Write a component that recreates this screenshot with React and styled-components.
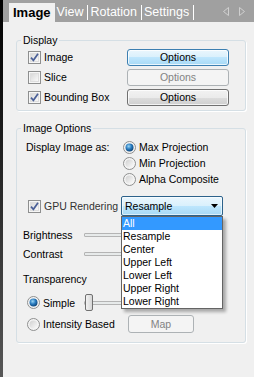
import React from 'react';
import styled, { createGlobalStyle, css } from 'styled-components';

const GlobalStyle = createGlobalStyle`
  html, body {
    margin: 0;
    padding: 0;
  }

  body {
    width: 254px;
    height: 377px;
    overflow: hidden;
    background: #f0f0f0;
    font-family: 'Liberation Sans', Arial, sans-serif;
    font-size: 10.5px;
    color: #000;
  }
`;

const Window = styled.div`
  display: flex;
  width: 254px;
  height: 377px;
`;

const Edge = styled.div`
  width: 3px;
  flex-shrink: 0;
  background: linear-gradient(#000 0%, #1c1c1c 35%, #575757 100%);
`;

const Main = styled.div`
  flex: 1;
  display: flex;
  flex-direction: column;
  background: #f0f0f0;
`;

const TabBar = styled.div`
  display: flex;
  align-items: flex-end;
  height: 22px;
  padding-left: 6px;
  background: #a0a0a0;
`;

const Tab = styled.div`
  white-space: nowrap;
  ${({ $active }) => $active
    ? css`
      height: 19px;
      line-height: 20px;
      padding: 0 4px;
      background: #f0f0f0;
      font-size: 13px;
      font-weight: bold;
      color: #000;
    `
    : css`
      height: 15px;
      line-height: 15px;
      margin-bottom: 2px;
      padding: 0 4px 0 2px;
      border-right: 1px solid #fff;
      font-size: 12.5px;
      color: #fff;
    `}
`;

const Scroller = styled.div`
  display: flex;
  align-items: center;
  gap: 10px;
  height: 22px;
  margin-left: auto;
  padding-right: 9px;
`;

const GroupBox = styled.fieldset`
  margin: ${({ $top }) => $top}px 8px 0 13px;
  padding: 0 0 ${({ $bottom }) => $bottom}px 6px;
  min-width: 0;
  border: 1px solid #d5dfe5;
  border-radius: 3px;
  box-shadow: 1px 1px 0 #fff;
`;

const Legend = styled.legend`
  margin-left: -2px;
  padding: 0 2px;
  line-height: 14px;
`;

const OptionsGrid = styled.div`
  display: grid;
  grid-template-columns: 99px 102px;
  grid-auto-rows: 20px;
  align-items: center;
  padding-left: 5px;
`;

const Check = styled.label`
  display: flex;
  align-items: center;
  gap: 3px;
  white-space: nowrap;
  color: ${({ $faded }) => ($faded ? '#333' : '#000')};
`;

const Button = styled.button`
  width: ${({ $w }) => $w}px;
  height: ${({ $h }) => $h}px;
  padding: 0;
  font: inherit;
  color: #000;
  border: 1px solid #707070;
  border-radius: 3px;
  background: linear-gradient(#f2f2f2 0%, #ebebeb 50%, #dddddd 50%, #cfcfcf 100%);
  box-shadow: inset 0 0 0 1px rgba(255, 255, 255, 0.75);

  ${({ $variant }) => $variant === 'hot' && css`
    border-color: #3c7fb1;
    background: linear-gradient(#eaf6fd 0%, #d9f0fc 50%, #bee6fd 50%, #a7d9f5 100%);
  `}

  ${({ $variant }) => $variant === 'disabled' && css`
    color: #838383;
    border-color: #adb2b5;
    background: #f4f4f4;
    box-shadow: none;
  `}
`;

const ModeGrid = styled.div`
  display: grid;
  grid-template-columns: 97px auto;
  grid-auto-rows: 16px;
  align-items: center;
  margin-top: 4px;
  padding-left: 3px;
`;

const Radio = styled.label`
  display: flex;
  align-items: center;
  gap: 3px;
  white-space: nowrap;
`;

const GpuRow = styled.div`
  display: grid;
  grid-template-columns: 93px 102px;
  align-items: center;
  height: 20px;
  margin-top: 9px;
  padding-left: 5px;
`;

const Combo = styled.div`
  position: relative;
  display: flex;
  align-items: center;
  justify-content: space-between;
  box-sizing: border-box;
  height: 20px;
  padding: 0 4px 0 3px;
  border: 1px solid #2c628b;
  border-radius: 2px;
  background: linear-gradient(#eaf6fd 0%, #d9f0fc 50%, #bee6fd 50%, #a7d9f5 100%);
  box-shadow: inset 0 0 0 1px rgba(255, 255, 255, 0.6);
`;

const List = styled.ul`
  position: absolute;
  top: 19px;
  left: -1px;
  z-index: 2;
  box-sizing: border-box;
  width: 102px;
  margin: 0;
  padding: 0;
  list-style: none;
  background: #fff;
  border: 1px solid #646464;
  box-shadow: 3px 3px 3px rgba(0, 0, 0, 0.3);
`;

const Item = styled.li`
  height: 13px;
  line-height: 13px;
  padding-left: 1px;
  white-space: nowrap;
  color: ${({ $selected }) => ($selected ? '#fff' : '#000')};
  background: ${({ $selected }) => ($selected ? '#3399ff' : 'transparent')};
`;

const SliderRow = styled.div`
  display: grid;
  grid-template-columns: ${({ $label }) => $label}px 1fr;
  align-items: center;
  height: 19px;
  margin-top: ${({ $top }) => $top || 0}px;
  padding-left: ${({ $indent }) => $indent || 0}px;
`;

const Track = styled.div`
  position: relative;
  width: 136px;
  height: 2px;
  border: 1px solid #b4b4b4;
  border-radius: 1px;
  background: #e7eaea;
`;

const Thumb = styled.div`
  position: absolute;
  left: 0;
  top: -8px;
  width: 6px;
  height: 15px;
  border: 1px solid #707070;
  border-radius: 2px;
  background: linear-gradient(90deg, #f2f2f2, #d6d6d6);
`;

const SectionLabel = styled.div`
  height: 14px;
  line-height: 14px;
  margin-top: 9px;
`;

const MapRow = styled.div`
  display: grid;
  grid-template-columns: 101px 66px;
  align-items: center;
  height: 18px;
  margin-top: 3px;
  padding-left: 4px;
`;

function CheckIcon({ checked }) {
  return (
    <svg width="13" height="13" viewBox="0 0 13 13">
      <defs>
        <linearGradient id="cb-in" x1="0" y1="0" x2="1" y2="1">
          <stop offset="0" stopColor="#d7d7d7" />
          <stop offset="1" stopColor="#fbfbfb" />
        </linearGradient>
      </defs>
      <rect x="0.5" y="0.5" width="12" height="12" fill="#f6f6f6" stroke="#8e8f8f" />
      <rect x="2.5" y="2.5" width="8" height="8" fill="url(#cb-in)" stroke="#dedede" />
      {checked && (
        <path d="M3 6.6 L5.4 9.3 L10 2.8" fill="none" stroke="#4a5f97" strokeWidth="1.7" />
      )}
    </svg>
  );
}

function RadioIcon({ checked }) {
  return (
    <svg width="13" height="13" viewBox="0 0 13 13">
      <defs>
        <linearGradient id="rb-bg" x1="0" y1="0" x2="1" y2="1">
          <stop offset="0" stopColor="#d0d0d0" />
          <stop offset="1" stopColor="#fbfbfb" />
        </linearGradient>
        <radialGradient id="rb-dot" cx="0.4" cy="0.35" r="0.7">
          <stop offset="0" stopColor="#9bd6f4" />
          <stop offset="0.5" stopColor="#2a7cc0" />
          <stop offset="1" stopColor="#0b3f70" />
        </radialGradient>
      </defs>
      <circle cx="6.5" cy="6.5" r="6" fill="#f4f4f4" stroke="#8e8f8f" />
      <circle cx="6.5" cy="6.5" r="4" fill={checked ? 'url(#rb-dot)' : 'url(#rb-bg)'} />
    </svg>
  );
}

function ScrollArrow({ dir }) {
  const points = dir === 'left' ? '5.5,0.5 0.5,4.5 5.5,8.5' : '0.5,0.5 5.5,4.5 0.5,8.5';
  return (
    <svg width="6" height="9" viewBox="0 0 6 9">
      <polygon points={points} fill="none" stroke="#cfcfcf" />
    </svg>
  );
}

const displayRows = [
  { label: 'Image', checked: true, variant: 'hot' },
  { label: 'Slice', checked: false, variant: 'disabled' },
  { label: 'Bounding Box', checked: true, variant: 'normal' },
];

const modes = ['Max Projection', 'Min Projection', 'Alpha Composite'];

const anchors = ['All', 'Resample', 'Center', 'Upper Left', 'Lower Left', 'Upper Right', 'Lower Right'];

export default function App() {
  return (
    <Window>
      <GlobalStyle />
      <Edge />
      <Main>
        <TabBar>
          <Tab $active>Image</Tab>
          <Tab>View</Tab>
          <Tab>Rotation</Tab>
          <Tab>Settings</Tab>
          <Scroller>
            <ScrollArrow dir="left" />
            <ScrollArrow dir="right" />
          </Scroller>
        </TabBar>

        <GroupBox $top={11} $bottom={3}>
          <Legend>Display</Legend>
          <OptionsGrid>
            {displayRows.map((row) => (
              <React.Fragment key={row.label}>
                <Check>
                  <CheckIcon checked={row.checked} />
                  {row.label}
                </Check>
                <Button $w={102} $h={17} $variant={row.variant}>Options</Button>
              </React.Fragment>
            ))}
          </OptionsGrid>
        </GroupBox>

        <GroupBox $top={10} $bottom={9}>
          <Legend>Image Options</Legend>
          <ModeGrid>
            <span>Display Image as:</span>
            {modes.map((mode, i) => (
              <React.Fragment key={mode}>
                {i > 0 && <span />}
                <Radio>
                  <RadioIcon checked={i === 0} />
                  {mode}
                </Radio>
              </React.Fragment>
            ))}
          </ModeGrid>

          <GpuRow>
            <Check $faded>
              <CheckIcon checked />
              GPU Rendering
            </Check>
            <Combo>
              <span>Resample</span>
              <svg width="7" height="4" viewBox="0 0 7 4">
                <polygon points="0,0 7,0 3.5,4" fill="#000" />
              </svg>
              <List>
                {anchors.map((a, i) => (
                  <Item key={a} $selected={i === 0}>{a}</Item>
                ))}
              </List>
            </Combo>
          </GpuRow>

          <SliderRow $label={61} $top={9}>
            <span>Brightness</span>
            <Track />
          </SliderRow>
          <SliderRow $label={61}>
            <span>Contrast</span>
            <Track />
          </SliderRow>

          <SectionLabel>Transparency</SectionLabel>

          <SliderRow $label={57} $top={7} $indent={4}>
            <Radio>
              <RadioIcon checked />
              Simple
            </Radio>
            <Track>
              <Thumb />
            </Track>
          </SliderRow>

          <MapRow>
            <Radio>
              <RadioIcon />
              Intensity Based
            </Radio>
            <Button $w={66} $h={18} $variant="disabled">Map</Button>
          </MapRow>
        </GroupBox>
      </Main>
    </Window>
  );
}
